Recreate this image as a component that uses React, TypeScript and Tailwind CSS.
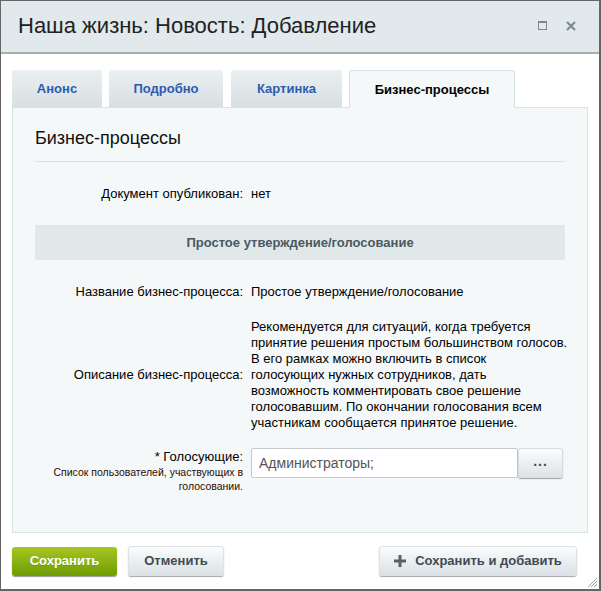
import React from "react";

const descrLines = [
  "Рекомендуется для ситуаций, когда требуется",
  "принятие решения простым большинством голосов.",
  "В его рамках можно включить в список",
  "голосующих нужных сотрудников, дать",
  "возможность комментировать свое решение",
  "голосовавшим. По окончании голосования всем",
  "участникам сообщается принятое решение.",
];

export default function App() {
  return (
    <div className="relative w-[601px] h-[591px] bg-white border-t border-l border-r-2 border-b-2 border-[#666] flex flex-col font-['Liberation_Sans',Arial,sans-serif] text-[13px] text-black">
      {/* header */}
      <div className="h-[53px] shrink-0 bg-[#e1e9ec] border-b-2 border-[#ababab] flex items-center pl-[17px] pr-[23px] pb-[2px]">
        <div className="text-[22px] leading-[26px] text-[#222]">Наша жизнь: Новость: Добавление</div>
        <div className="ml-auto flex items-center gap-[19px]">
          <svg width="9" height="9" viewBox="0 0 9 9">
            <rect x="0.5" y="0.5" width="8" height="8" fill="none" stroke="#7b8794" strokeWidth="1" />
            <rect x="0" y="0" width="9" height="2" fill="#7b8794" />
          </svg>
          <svg width="10" height="10" viewBox="0 0 10 10">
            <path d="M1 1 L9 9 M9 1 L1 9" stroke="#7b8794" strokeWidth="2" />
          </svg>
        </div>
      </div>

      {/* body */}
      <div className="px-[11px] pt-[16px]">
        {/* tabs */}
        <div className="flex items-end h-[37px]">
          <div className="w-[90px] h-[37px] rounded-t-[3px] bg-linear-to-b from-[#ebf0f2] to-[#d7dfe2] flex items-center justify-center font-bold text-[#2c5cae]">
            Анонс
          </div>
          <div className="ml-[7px] w-[114px] h-[37px] rounded-t-[3px] bg-linear-to-b from-[#ebf0f2] to-[#d7dfe2] flex items-center justify-center font-bold text-[#2c5cae]">
            Подробно
          </div>
          <div className="ml-[8px] w-[111px] h-[37px] rounded-t-[3px] bg-linear-to-b from-[#ebf0f2] to-[#d7dfe2] flex items-center justify-center font-bold text-[#2c5cae]">
            Картинка
          </div>
          <div className="relative z-10 ml-[7px] w-[166px] h-[38px] -mb-px rounded-t-[3px] bg-[#f5f8f9] border-t border-l border-r border-[#d8e4ea] flex items-center justify-center font-bold text-black">
            Бизнес-процессы
          </div>
        </div>

        {/* panel */}
        <div className="h-[426px] border border-[#d8e3e8] bg-[#f5f8f9] px-[22px]">
          <div className="pt-[20px] pb-[13px] border-b border-[#dbe2e6] text-[18px] leading-[20px] text-[#111]">
            Бизнес-процессы
          </div>

          <div className="mt-[24px] flex leading-[16px]">
            <div className="w-[208px] text-right">Документ опубликован:</div>
            <div className="ml-[8px]">нет</div>
          </div>

          <div className="mt-[23px] h-[35px] bg-[#e0e8ea] flex items-center justify-center font-bold text-[#4b5860]">
            Простое утверждение/голосование
          </div>

          <div className="mt-[24px] flex leading-[16px]">
            <div className="w-[208px] text-right">Название бизнес-процесса:</div>
            <div className="ml-[8px]">Простое утверждение/голосование</div>
          </div>

          <div className="mt-[19px] flex items-center leading-[16px]">
            <div className="w-[208px] text-right">Описание бизнес-процесса:</div>
            <div className="ml-[8px] w-[314px] flex flex-col">
              {descrLines.map((l) => (
                <span key={l} className="whitespace-nowrap">
                  {l}
                </span>
              ))}
            </div>
          </div>

          <div className="mt-[17px] flex items-start">
            <div className="w-[208px] text-right pt-[1px]">
              <div className="leading-[16px]">* Голосующие:</div>
              <div className="text-[10.5px] leading-[14px] text-[#2a0e00]">
                Список пользователей, участвующих в голосовании.
              </div>
            </div>
            <div className="ml-[8px] flex">
              <div className="w-[267px] h-[30px] bg-white border border-[#c3cbcf] rounded-[2px] flex items-center pl-[7px] text-[14px] text-[#555]">
                Администраторы;
              </div>
              <div className="w-[45px] h-[30px] rounded-[3px] bg-linear-to-b from-[#fbfcfc] to-[#dde3e6] shadow-[0_1px_1px_rgba(0,0,0,0.35)] border border-[#d6dcdf] flex items-center justify-center font-bold text-[#3f4b54] text-[14px] tracking-[1px] pb-[4px]">
                ...
              </div>
            </div>
          </div>
        </div>

        {/* footer */}
        <div className="mt-[13px] flex items-center pr-[11px]">
          <div className="w-[105px] h-[29px] rounded-[3px] bg-linear-to-b from-[#a7c622] to-[#6f9c00] shadow-[0_1px_1px_rgba(0,0,0,0.4)] flex items-center justify-center font-bold text-white [text-shadow:0_1px_0_rgba(0,0,0,0.15)]">
            Сохранить
          </div>
          <div className="ml-[11px] w-[96px] h-[30px] rounded-[3px] bg-linear-to-b from-[#fbfcfc] to-[#dbe1e4] border border-[#dde2e5] shadow-[0_1px_1px_rgba(0,0,0,0.35)] flex items-center justify-center font-bold text-[#3f4b54]">
            Отменить
          </div>
          <div className="ml-auto w-[198px] h-[30px] rounded-[3px] bg-linear-to-b from-[#fbfcfc] to-[#dbe1e4] border border-[#dde2e5] shadow-[0_1px_1px_rgba(0,0,0,0.35)] flex items-center justify-center gap-[9px] font-bold text-[#3f4b54]">
            <svg width="12" height="12" viewBox="0 0 12 12">
              <rect x="4.5" y="0" width="3" height="12" fill="#59626c" />
              <rect x="0" y="4.5" width="12" height="3" fill="#59626c" />
            </svg>
            Сохранить и добавить
          </div>
        </div>
      </div>

      {/* resize grip */}
      <svg className="absolute right-[1px] bottom-[1px]" width="12" height="12" viewBox="0 0 12 12">
        <path d="M11 2 L2 11 M11 5 L5 11 M11 8 L8 11" stroke="#9aa3a8" strokeWidth="1" />
      </svg>
    </div>
  );
}
